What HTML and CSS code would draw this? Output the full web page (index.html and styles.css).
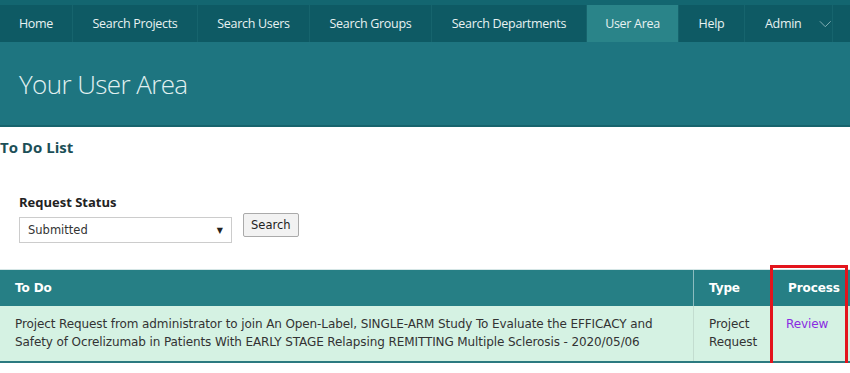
FILE: index.html
```html
<!DOCTYPE html>
<html lang="en">
<head>
    <meta charset="UTF-8">
    <meta name="viewport" content="width=device-width, initial-scale=1.0">
    <title>Your User Area</title>
    <link rel="stylesheet" href="styles.css">
</head>
<body>
    <nav class="topnav">
        <a class="nav-item home" href="#">Home</a>
        <a class="nav-item projects" href="#">Search Projects</a>
        <a class="nav-item users" href="#">Search Users</a>
        <a class="nav-item groups" href="#">Search Groups</a>
        <a class="nav-item departments" href="#">Search Departments</a>
        <a class="nav-item user-area active" href="#">User Area</a>
        <a class="nav-item help" href="#">Help</a>
        <a class="nav-item admin" href="#">Admin
            <svg class="chevron" width="14" height="8" viewBox="0 0 14 8"><path d="M1 1 L7 7 L13 1" fill="none" stroke="#8fb8bd" stroke-width="1"/></svg>
        </a>
        <span class="nav-fill"></span>
    </nav>

    <header class="banner">
        <h1>Your User Area</h1>
    </header>

    <main class="content">
        <h2 class="section-title">To Do List</h2>

        <div class="filter">
            <label for="request-status">Request Status</label>
            <div class="filter-row">
                <div class="select-box">
                    <span id="request-status">Submitted</span>
                    <span class="caret">&#9660;</span>
                </div>
                <button class="search-btn">Search</button>
            </div>
        </div>

        <div class="table-wrap">
            <table class="todo-table">
                <thead>
                    <tr>
                        <th class="col-todo">To Do</th>
                        <th class="col-type">Type</th>
                        <th class="col-process">Process</th>
                    </tr>
                </thead>
                <tbody>
                    <tr>
                        <td>Project Request from administrator to join An Open-Label, SINGLE-ARM Study To Evaluate the EFFICACY and Safety of Ocrelizumab in Patients With EARLY STAGE Relapsing REMITTING Multiple Sclerosis - 2020/05/06</td>
                        <td>Project Request</td>
                        <td><a class="review-link" href="#">Review</a></td>
                    </tr>
                </tbody>
            </table>
            <div class="highlight"></div>
        </div>
    </main>
</body>
</html>
```

FILE: styles.css
```css
body {
    margin: 0;
    padding: 0;
    background: #fff;
    font-family: "Open Sans", "Noto Sans", sans-serif;
}
.topnav {
    display: flex;
    background: #0e5a64;
    border-top: 5px solid #136670;
    height: 37px;
}
.nav-item {
    box-sizing: border-box;
    display: flex;
    align-items: center;
    justify-content: center;
    flex-shrink: 0;
    white-space: nowrap;
    color: #e8f2f2;
    font-size: 12.5px;
    text-decoration: none;
    border-right: 1px solid #16646d;
    letter-spacing: -0.3px;
}
.home { width: 73px; }
.projects { width: 125px; }
.users { width: 112px; }
.groups { width: 122px; }
.departments { width: 155px; }
.user-area { width: 92px; }
.help { width: 66px; }
.nav-item.active {
    background: #2a8489;
}
.nav-item.admin {
    width: 88px;
    justify-content: flex-start;
    padding-left: 20px;
    gap: 18px;
}
.nav-fill {
    flex: 1;
}
.banner {
    background: #1e7580;
    height: 83px;
    border-bottom: 2px solid #17646d;
    display: flex;
    align-items: center;
}
.banner h1 {
    margin: 0 0 0 19px;
    font-weight: 300;
    font-size: 26px;
    color: #e2f1f1;
    letter-spacing: -0.6px;
}
.section-title {
    margin: 10px 0 0 0;
    font-size: 15px;
    font-weight: bold;
    color: #1c4f57;
}
.filter {
    margin: 36px 0 0 19px;
}
.filter label {
    display: block;
    font-size: 13px;
    font-weight: bold;
    color: #222;
}
.filter-row {
    display: flex;
    align-items: flex-start;
    gap: 11px;
}
.select-box {
    width: 195px;
    height: 24px;
    border: 1px solid #ccc;
    display: flex;
    align-items: center;
    justify-content: space-between;
    padding: 0 8px;
    font-family: "DejaVu Sans", Verdana, sans-serif;
    font-size: 11.5px;
    color: #333;
    margin-top: 6px;
}
.caret {
    font-size: 8px;
    color: #222;
}
.search-btn {
    height: 24px;
    margin-top: 2px;
    padding: 0 7px;
    border: 1px solid #aaa;
    background: #f2f2f2;
    font-family: "DejaVu Sans", Verdana, sans-serif;
    font-size: 11.5px;
    color: #222;
    border-radius: 2px;
}
.table-wrap {
    position: relative;
    margin-top: 26px;
}
.todo-table {
    width: 100%;
    table-layout: fixed;
    border-collapse: collapse;
    font-family: "DejaVu Sans", Verdana, sans-serif;
    font-size: 12px;
    letter-spacing: -0.1px;
}
.todo-table th {
    background: #267f85;
    color: #fff;
    text-align: left;
    font-weight: bold;
    height: 36px;
    padding: 0 15px;
    border-left: 1px solid #8cbcbf;
    border-top: 1px solid #d5e6e6;
}
.todo-table th:first-child,
.todo-table td:first-child {
    border-left: none;
}
.todo-table td {
    background: #d5f2e3;
    color: #333;
    vertical-align: top;
    padding: 9px 15px 10px 15px;
    line-height: 18px;
    border-left: 1px solid #c3ddd0;
    border-bottom: 2px solid #2b7a80;
}
.col-type {
    width: 48px;
}
.col-process {
    width: 47px;
}
.col-process,
.todo-table td:last-child {
    padding-left: 13px;
}
.review-link {
    color: #8a2be2;
    text-decoration: none;
}
.highlight {
    position: absolute;
    left: 770px;
    top: -4px;
    width: 72px;
    height: 96px;
    border: 3px solid #e3141c;
}
```
